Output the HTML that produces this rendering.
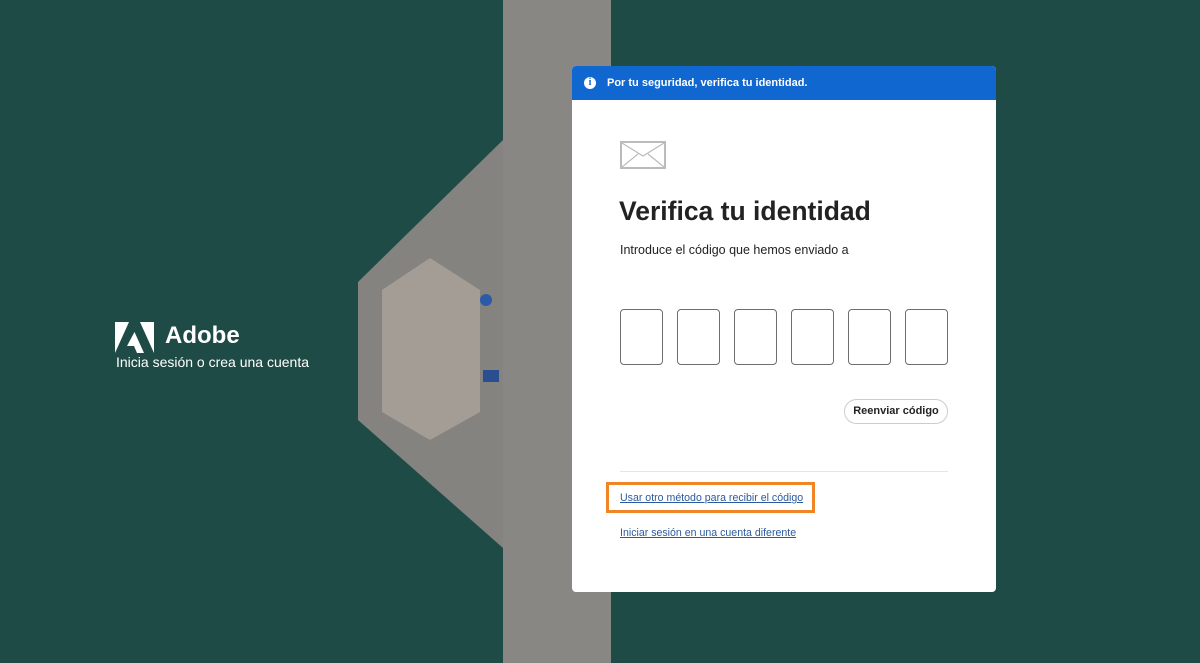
<!DOCTYPE html>
<html><head><meta charset="utf-8"><style>
body{margin:0;width:1200px;height:663px;overflow:hidden;background:#1f4b46;font-family:"Liberation Sans",sans-serif;position:relative}
.bg{position:absolute;left:0;top:0}
.card{position:absolute;left:572px;top:66px;width:424px;height:526px;background:#fff;border-radius:4px;overflow:hidden}
.bar{height:34px;background:#1167d0;color:#fff;font-size:11px;font-weight:bold;display:flex;align-items:center}
.bar .i{width:12px;height:12px;border-radius:50%;background:#fff;color:#1167d0;font-size:10px;text-align:center;line-height:12px;margin:0 11px 0 12px;font-family:"Liberation Serif",serif;font-weight:bold}
h1{position:absolute;left:47px;top:130px;margin:0;font-size:26.5px;font-weight:bold;color:#222}
.p{position:absolute;left:48px;top:177px;font-size:12.5px;color:#222}
.box{position:absolute;top:243px;width:43px;height:56px;border:1.5px solid #6e6e6e;border-radius:4px;box-sizing:border-box}
.btn{position:absolute;left:272px;top:333px;width:104px;height:25px;border:1.5px solid #ccc;border-radius:13px;box-sizing:border-box;font-size:11px;font-weight:bold;text-align:center;line-height:22px;color:#222}
.hr{position:absolute;left:48px;top:405px;width:328px;height:1px;background:#e5e5e5}
a{position:absolute;color:#2b5a9e;font-size:10.6px;text-decoration:underline}
.hl{position:absolute;left:606px;top:482px;width:209px;height:31px;border:3px solid #f08526;box-sizing:border-box}
</style></head><body>
<svg class="bg" width="1200" height="663">
<rect x="0" y="0" width="1200" height="663" fill="#1f4b46"/>
<polygon points="503,140 358,282 358,420 503,548" fill="#85837f"/>
<rect x="503" y="0" width="108" height="663" fill="#898783"/>
<polygon points="430,258 480,290 480,412 430,440 382,412 382,290" fill="#a39d95"/>
<circle cx="486" cy="300" r="6" fill="#2a5aa8"/>
<rect x="483" y="370" width="16" height="12" fill="#2a4f90"/>
</svg>
<svg style="position:absolute;left:115px;top:322px" width="39" height="31" viewBox="0 0 39 31"><polygon points="0,0 14,0 0,31" fill="#fff"/><polygon points="25,0 39,0 39,31" fill="#fff"/><polygon points="19.5,10 29,31 22,31 19,24 12,24" fill="#fff"/></svg>
<div style="position:absolute;left:165px;top:322px;color:#fff;font-size:24px;font-weight:bold">Adobe</div>
<div style="position:absolute;left:116px;top:354px;color:#fff;font-size:14px">Inicia sesión o crea una cuenta</div>
<div class="card">
<div class="bar"><div class="i">i</div>Por tu seguridad, verifica tu identidad.</div>
<svg style="position:absolute;left:48px;top:75px" width="46" height="28"><rect x="1" y="1" width="44" height="26" fill="none" stroke="#bbb" stroke-width="2"/><path d="M2 2 L23 15 L44 2 M2 26 L18 13 M44 26 L28 13" stroke="#bbb" fill="none" stroke-width="1.2"/></svg>
<h1>Verifica tu identidad</h1>
<div class="p">Introduce el código que hemos enviado a</div>
<div class="box" style="left:48px"></div><div class="box" style="left:105px"></div><div class="box" style="left:162px"></div><div class="box" style="left:219px"></div><div class="box" style="left:276px"></div><div class="box" style="left:333px"></div>
<div class="btn">Reenviar código</div>
<div class="hr"></div>
<a style="left:48px;top:426px">Usar otro método para recibir el código</a>
<a style="left:48px;top:461px">Iniciar sesión en una cuenta diferente</a>
</div>
<div class="hl"></div>
</body></html>
